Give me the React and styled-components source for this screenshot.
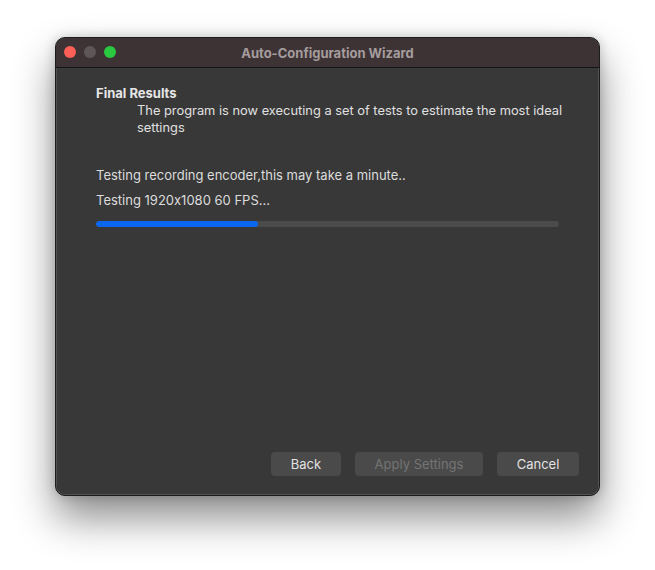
import React from "react";
import styled, { createGlobalStyle } from "styled-components";

const Global = createGlobalStyle`
  html, body { margin: 0; padding: 0; background: #ffffff; }
  body {
    font-family: Inter, "Liberation Sans", sans-serif;
    font-feature-settings: "calt" 0;
    -webkit-font-smoothing: antialiased;
  }
`;

const Page = styled.div`
  width: 655px;
  height: 570px;
  padding: 37px 0 0 55px;
  box-sizing: border-box;
  background: #ffffff;
`;

const Window = styled.div`
  width: 545px;
  height: 459px;
  box-sizing: border-box;
  border: 1px solid #1c1c1c;
  border-radius: 10px;
  background: #383838;
  display: flex;
  flex-direction: column;
  overflow: hidden;
  box-shadow: 0 0 0 0.5px rgba(255,255,255,0.25) inset, 0 22px 40px rgba(0,0,0,0.45), 0 0 12px rgba(0,0,0,0.2);
`;

const TitleBar = styled.div`
  height: 29px;
  flex: none;
  position: relative;
  display: flex;
  align-items: center;
  justify-content: center;
  background: #3d3335;
  border-bottom: 1px solid #141414;
`;

const Lights = styled.div`
  position: absolute;
  left: 8px;
  top: 8px;
  display: flex;
  gap: 8px;
`;

const Light = styled.span`
  width: 12px;
  height: 12px;
  border-radius: 50%;
  background: ${(p) => p.$c};
`;

const Title = styled.div`
  font-size: 13px;
  font-weight: 700;
  color: #a59c9d;
`;

const Body = styled.div`
  flex: 1;
  display: flex;
  flex-direction: column;
  padding: 17px 40px 19px 40px;
`;

const Heading = styled.div`
  font-size: 13px;
  font-weight: 700;
  color: #e6e6e6;
  line-height: 17px;
`;

const Desc = styled.div`
  margin-left: 41px;
  margin-right: -20px;
  white-space: nowrap;
  font-size: 12.85px;
  color: #e0e0e0;
  line-height: 17px;
`;

const Status = styled.div`
  margin-top: ${(p) => p.$mt}px;
  font-size: 13px;
  color: #dcdcdc;
  line-height: 17px;
`;

const Track = styled.div`
  margin-top: 12px;
  width: 463px;
  height: 6px;
  border-radius: 3px;
  background: #4b4b4b;
  overflow: hidden;
`;

const Fill = styled.div`
  height: 100%;
  border-radius: 3px;
  background: #0b67ee;
`;

const Spacer = styled.div`
  flex: 1;
`;

const Buttons = styled.div`
  display: flex;
  justify-content: flex-end;
  gap: 14px;
  margin-right: -20px;
`;

const Button = styled.button`
  height: 24px;
  width: ${(p) => p.$w}px;
  border: none;
  border-radius: 4px;
  background: #4a4a4a;
  color: ${(p) => (p.disabled ? "#747474" : "#e2e2e2")};
  font-family: inherit;
  font-feature-settings: "calt" 0;
  font-size: 13px;
  padding: 0;
`;

export default function App() {
  return (
    <>
      <Global />
      <Page>
        <Window>
          <TitleBar>
            <Lights>
              <Light $c="#fe5f57" />
              <Light $c="#5d5758" />
              <Light $c="#2ac840" />
            </Lights>
            <Title>Auto-Configuration Wizard</Title>
          </TitleBar>
          <Body>
            <Heading>Final Results</Heading>
            <Desc>
              The program is now executing a set of tests to estimate the most ideal
              <br />
              settings
            </Desc>
            <Status $mt={31}>Testing recording encoder,this may take a minute..</Status>
            <Status $mt={8}>Testing 1920x1080 60 FPS...</Status>
            <Track>
              <Fill style={{ width: "35%" }} />
            </Track>
            <Spacer />
            <Buttons>
              <Button $w={70}>Back</Button>
              <Button $w={128} disabled>Apply Settings</Button>
              <Button $w={82}>Cancel</Button>
            </Buttons>
          </Body>
        </Window>
      </Page>
    </>
  );
}
